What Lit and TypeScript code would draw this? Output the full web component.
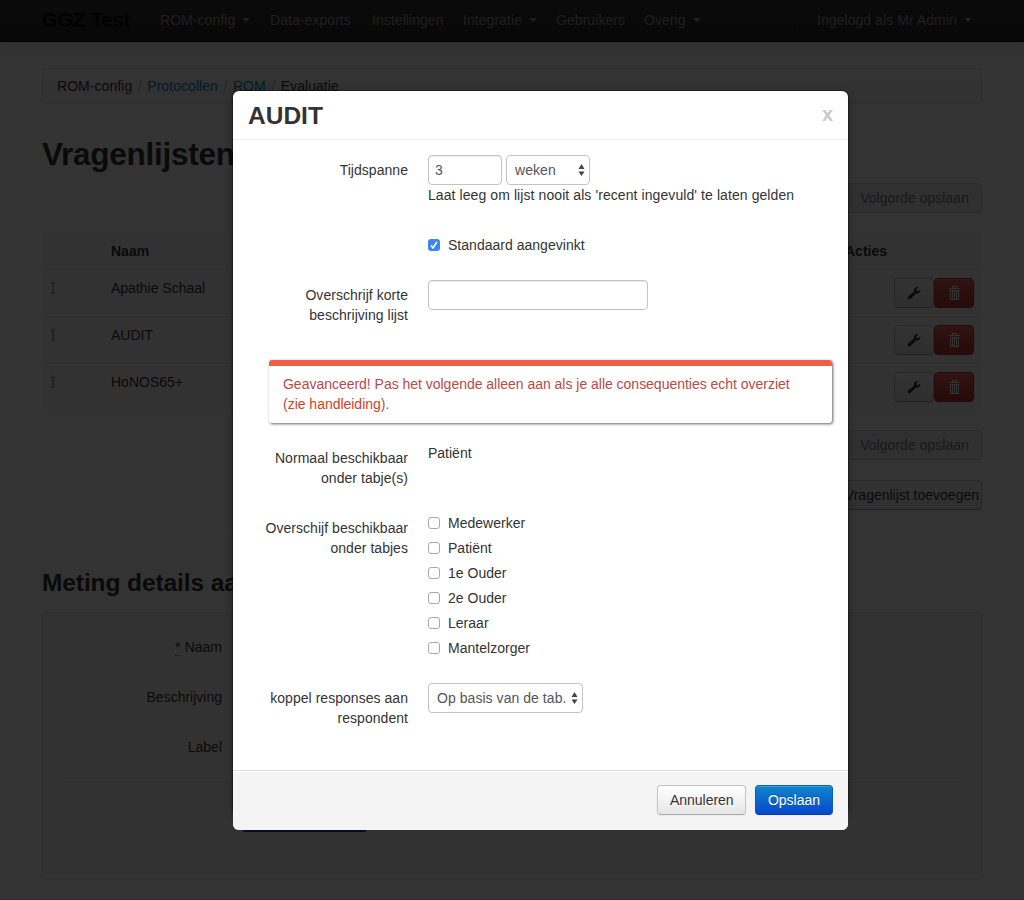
import { LitElement, html, css, svg, nothing } from "lit";
import { customElement } from "lit/decorators.js";

const wrench = svg`<svg class="ic" width="14" height="14" viewBox="0 0 14 14"><path fill="#333" d="M.9 10.700 7 5.400C6.600 3.600 7.300 1.900 8.900 1.200 9.700.9 10.600.9 11.300 1.200L9.300 3.200 9.700 4.900 11.300 5.200 13.200 3.300C13.600 5.200 12.700 6.900 11 7.500 10.300 7.700 9.600 7.700 9 7.500L3.500 12.900C2.900 13.500 2 13.500 1.300 12.900.5 12.300.4 11.300.9 10.700Z"/></svg>`;
const trash = svg`<svg class="ic" width="14" height="14" viewBox="0 0 14 14"><path fill="#fff" d="M2 2h3V0h5v2h3v1H2ZM6 1v1h3V1ZM3 4h9v10H3ZM4 5v8h1V5ZM6 5v8h1V5ZM8 5v8h1V5ZM10 5v8h1V5Z" fill-rule="evenodd"/></svg>`;
const resize = svg`<svg width="6" height="14" viewBox="0 0 6 14"><path fill="#333" d="M3 0 5.700 3H4v8h1.700L3 14 .3 11H2V3H.3Z"/></svg>`;
const arrows = svg`<svg class="arrows" width="7" height="12" viewBox="0 0 7 12"><path fill="#444" d="M3.500 0 6.500 5h-6ZM3.500 12 .5 7.500h6Z"/></svg>`;
const check = svg`<svg width="12" height="12" viewBox="0 0 12 12"><path fill="none" stroke="#fff" stroke-width="1.600" d="M3 6.400 5 8.800 8.900 3"/></svg>`;

@customElement("app-root")
export class AppRoot extends LitElement {
  static styles = css`
    :host { display: block; position: relative; width: 1024px; height: 900px; overflow: hidden; background: #fff;
      font: 14px/20px "Liberation Sans", Arial, sans-serif; color: #333; }
    * { box-sizing: border-box; }
    .page { height: 900px; border-bottom: 1px solid #dccbd3; background: #fcfcfc; }
    .nav { height: 42px; border-bottom: 1px solid #000; background: linear-gradient(#363636, #262626);
      box-shadow: 0 1px 8px rgba(0,0,0,.1); padding-left: 42px; display: flex; color: #999; white-space: nowrap; }
    .nav span { padding-top: 10px; flex: none; letter-spacing: .06px; }
    .nav .brand { width: 118px; font-size: 20px; font-weight: bold; color: #000; letter-spacing: 0; text-shadow: 0 1px 0 rgba(255,255,255,.1), 0 0 30px rgba(255,255,255,.125); }
    .caret { display: inline-block; border: 4px solid transparent; border-top-color: #999; border-bottom: 0; margin-left: 7px; vertical-align: 3px; }
    .n1 { width: 110px; } .n2 { width: 102px; } .n3 { width: 91px; } .n4 { width: 93px; } .n5 { width: 88px; }
    .n6 { width: 153px; } .n7 { border-left: 1px solid #333; padding-left: 19px; }
    .main { width: 940px; margin-left: 42px; }
    .crumbs { margin-top: 26px; height: 36px; border: 1px solid #e4e4e4; border-radius: 4px; background: linear-gradient(#fff, #f6f6f6);
      padding: 7px 14px; display: flex; gap: 5.5px; white-space: nowrap; letter-spacing: .06px; }
    .crumbs a { color: #08c; } .crumbs i { color: #bbb; font-style: normal; }
    h2 { margin: 30px 0 0; font-size: 31.5px; line-height: 40px; height: 49px; letter-spacing: -.25px; }
    h3 { margin: 32px 0 0; font-size: 24.5px; line-height: 40px; height: 49px; letter-spacing: -.1px; }
    .right { display: flex; justify-content: flex-end; }
    .btn { height: 30px; border: 1px solid #c5c5c5; border-bottom-color: #aaa; border-radius: 4px; padding: 4px 12px;
      background: linear-gradient(#fff, #e6e6e6); box-shadow: inset 0 1px 0 rgba(255,255,255,.2), 0 1px 2px rgba(0,0,0,.05);
      text-shadow: 0 1px 1px rgba(255,255,255,.75); white-space: nowrap; color: #333; }
    .off { opacity: .65; background: #e6e6e6; box-shadow: none; letter-spacing: .04px; }
    .tight { padding: 4px 2px 4px 12px; }
    .table { margin-top: 20px; background: #fafafa; margin-bottom: 20px; }
    .tr { display: grid; grid-template-columns: 69px 734px 137px; height: 47px; border-top: 1px solid #e4e4e4; padding-top: 8px; }
    .tr svg { display: block; }
    .th { height: 36px; border: 0; font-weight: bold; background: #f7f7f7; }
    .handle { padding: 3px 0 0 8px; opacity: .4; }
    .acts { display: flex; justify-content: flex-end; padding-right: 8px; }
    .acts .btn { width: 40px; padding: 7px 12px; }
    .acts .red { background: linear-gradient(#ee5f5b, #bd362f); border-color: #bd362f; }
    .gap { margin-top: 20px; }
    .hr { border-top: 1px solid #e8e8e8; margin-top: 20px; }
    .well { height: 268px; background: #f9f9f9; border: 1px solid #e3e3e3; border-radius: 4px; box-shadow: inset 0 1px 1px rgba(0,0,0,.05); padding: 24px 20px; }
    .well p { margin: 0 0 30px; width: 159px; text-align: right; }
    .well .hr { margin: -5px 0 20px; }
    abbr { border-bottom: 1px dotted #777; }
    .save { width: 125px; height: 29px; margin-left: 179px; background: #0044cc; border-radius: 4px; }
    .shade { position: absolute; inset: 0; background: rgba(0,0,0,.8); }
    .glow { position: absolute; left: 233px; top: 91px; width: 615px; height: 723px; border-radius: 6px; box-shadow: 0 0 0 1px rgba(0,0,0,.3), 0 3px 7px rgba(0,0,0,.4); }
    .modal { position: absolute; left: 233px; top: 91px; width: 615px; height: 739px; background: #fff; border-radius: 6px; overflow: hidden; }
    .head { height: 49px; border-bottom: 1px solid #eee; padding: 9px 15px; display: flex; justify-content: space-between; font-weight: bold; }
    .head b { font-size: 24.5px; line-height: 31px; }
    .close { font-size: 20px; line-height: 28px; color: #c9c9c9; }
    .body { height: 630px; padding: 15px; }
    .row { display: grid; grid-template-columns: 160px 1fr; column-gap: 20px; }
    .label { padding-top: 5px; text-align: right; letter-spacing: .04px; }
    .help { letter-spacing: .083px; }
    .r1 { height: 80px; } .r2 { height: 45px; } .r3 { height: 80px; } .r4 { height: 70px; } .r5 { height: 170px; }
    .line { display: flex; gap: 4px; }
    .field, .select { height: 30px; border: 1px solid #c3c3c3; border-radius: 4px; background: #fff; color: #555; padding: 4px 6px; }
    .field { box-shadow: inset 0 1px 1px rgba(0,0,0,.075); }
    .select { display: flex; justify-content: space-between; align-items: center; padding: 4px 4px 4px 8px; white-space: nowrap; letter-spacing: .05px; }
    .w74 { width: 74px; } .w84 { width: 84px; } .w220 { width: 220px; } .w155 { width: 155px; }
    .arrows { flex: none; }
    .chk { display: flex; gap: 8px; margin-bottom: 5px; align-items: center; height: 20px; letter-spacing: .02px; }
    .box { width: 12px; height: 12px; border: 1px solid #a9a9a9; border-radius: 3px; flex: none; display: flex; }
    .on { border: 0; background: #3b86f7; }
    .alert { margin: 0 0 20px 21px; width: 563px; height: 63px; border-radius: 3px; border-top: 6px solid #ee5f45; padding: 8px 20px 8px 14px; color: #b94a48;
      letter-spacing: -.02px; box-shadow: 1px 1px 3px rgba(0,0,0,.6); }
    .alert a { color: #d3411e; }
    .foot { height: 60px; border-top: 1px solid #ddd; background: #f4f4f4; box-shadow: inset 0 1px 0 #fff; padding: 14px 15px; display: flex; justify-content: flex-end; gap: 9px; }
    .foot .btn { letter-spacing: -.03px; }
    .cancel { width: 89px; }
    .blue { width: 78px; color: #fff; border-color: #0a62b8 #0a5cc0 #083fa8; background: linear-gradient(#0f86cc, #0847cc); text-shadow: 0 -1px 0 rgba(0,0,0,.25); }
  `;

  private action(label: string) {
    return html`<div class="right"><div class="btn off">${label}</div></div>`;
  }

  private checkbox(label: string, on = false) {
    return html`<div class="chk"><span class="box ${on ? "on" : ""}">${on ? check : nothing}</span><span>${label}</span></div>`;
  }

  render() {
    const caret = html`<i class="caret"></i>`;
    return html`
      <div class="page">
        <div class="nav">
          <span class="brand">GGZ Test</span><span class="n1">ROM-config${caret}</span><span class="n2">Data-exports</span>
          <span class="n3">Instellingen</span><span class="n4">Integratie${caret}</span><span class="n5">Gebruikers</span>
          <span class="n6">Overig${caret}</span><span class="n7">Ingelogd als Mr Admin${caret}</span>
        </div>
        <div class="main">
          <div class="crumbs"><span>ROM-config</span><i>/</i><a>Protocollen</a><i>/</i><a>ROM</a><i>/</i><span>Evaluatie</span></div>
          <h2>Vragenlijsten</h2>
          ${this.action("Volgorde opslaan")}
          <div class="table">
            <div class="tr th"><span></span><span>Naam</span><span>Acties</span></div>
            ${["Apathie Schaal", "AUDIT", "HoNOS65+"].map((n) => html`
              <div class="tr"><span class="handle">${resize}</span><span>${n}</span>
                <div class="acts"><div class="btn">${wrench}</div><div class="btn red">${trash}</div></div></div>`)}
          </div>
          ${this.action("Volgorde opslaan")}
          <div class="right gap"><div class="btn tight">Vragenlijst toevoegen</div></div>
          <div class="hr"></div>
          <h3>Meting details aanpassen</h3>
          <div class="well">
            <p><abbr>*</abbr> Naam</p><p>Beschrijving</p><p>Label</p>
            <div class="hr"></div>
            <div class="save"></div>
          </div>
        </div>
      </div>
      <div class="shade"></div>
      <div class="glow"></div>
      <div class="modal">
        <div class="head"><b>AUDIT</b><span class="close">x</span></div>
        <div class="body">
          <div class="row r1"><div class="label">Tijdspanne</div>
            <div><div class="line"><div class="field w74">3</div><div class="select w84"><span>weken</span>${arrows}</div></div>
              <div class="help">Laat leeg om lijst nooit als 'recent ingevuld' te laten gelden</div></div></div>
          <div class="row r2"><div></div><div>${this.checkbox("Standaard aangevinkt", true)}</div></div>
          <div class="row r3"><div class="label">Overschrijf korte beschrijving lijst</div><div class="field w220"></div></div>
          <div class="alert">Geavanceerd! Pas het volgende alleen aan als je alle consequenties echt overziet<br>(<a>zie handleiding</a>).</div>
          <div class="row r4"><div class="label">Normaal beschikbaar onder tabje(s)</div><div>Patiënt</div></div>
          <div class="row r5"><div class="label">Overschijf beschikbaar onder tabjes</div>
            <div>${["Medewerker", "Patiënt", "1e Ouder", "2e Ouder", "Leraar", "Mantelzorger"].map((t) => this.checkbox(t))}</div></div>
          <div class="row"><div class="label">koppel responses aan respondent</div>
            <div class="select w155"><span>Op basis van de tab.</span>${arrows}</div></div>
        </div>
        <div class="foot"><div class="btn cancel">Annuleren</div><div class="btn blue">Opslaan</div></div>
      </div>`;
  }
}
